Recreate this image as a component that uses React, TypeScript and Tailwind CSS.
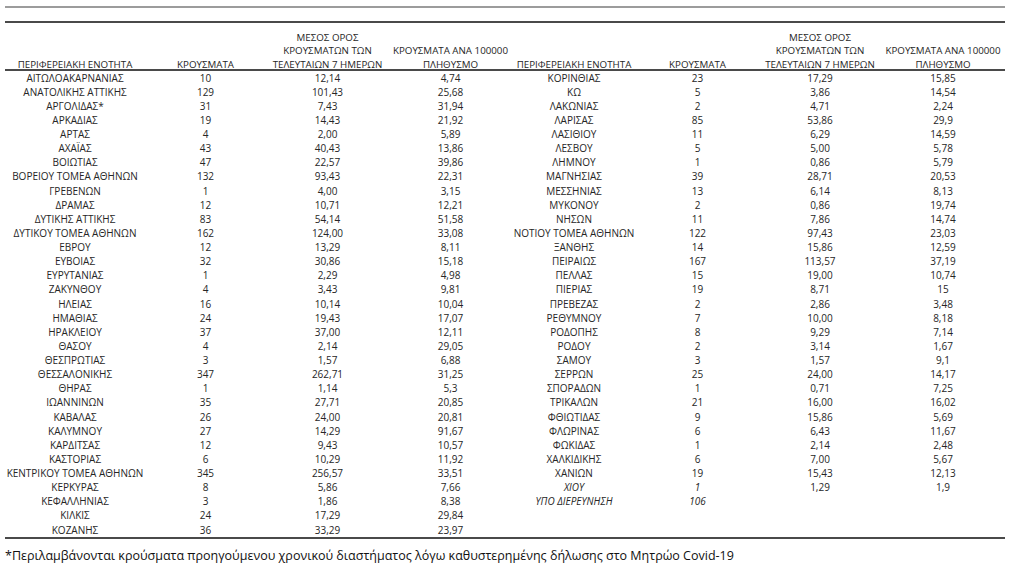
const left: string[][] = [
  ['ΑΙΤΩΛΟΑΚΑΡΝΑΝΙΑΣ', '10', '12,14', '4,74'],
  ['ΑΝΑΤΟΛΙΚΗΣ ΑΤΤΙΚΗΣ', '129', '101,43', '25,68'],
  ['ΑΡΓΟΛΙΔΑΣ*', '31', '7,43', '31,94'],
  ['ΑΡΚΑΔΙΑΣ', '19', '14,43', '21,92'],
  ['ΑΡΤΑΣ', '4', '2,00', '5,89'],
  ['ΑΧΑΪΑΣ', '43', '40,43', '13,86'],
  ['ΒΟΙΩΤΙΑΣ', '47', '22,57', '39,86'],
  ['ΒΟΡΕΙΟΥ ΤΟΜΕΑ ΑΘΗΝΩΝ', '132', '93,43', '22,31'],
  ['ΓΡΕΒΕΝΩΝ', '1', '4,00', '3,15'],
  ['ΔΡΑΜΑΣ', '12', '10,71', '12,21'],
  ['ΔΥΤΙΚΗΣ ΑΤΤΙΚΗΣ', '83', '54,14', '51,58'],
  ['ΔΥΤΙΚΟΥ ΤΟΜΕΑ ΑΘΗΝΩΝ', '162', '124,00', '33,08'],
  ['ΕΒΡΟΥ', '12', '13,29', '8,11'],
  ['ΕΥΒΟΙΑΣ', '32', '30,86', '15,18'],
  ['ΕΥΡΥΤΑΝΙΑΣ', '1', '2,29', '4,98'],
  ['ΖΑΚΥΝΘΟΥ', '4', '3,43', '9,81'],
  ['ΗΛΕΙΑΣ', '16', '10,14', '10,04'],
  ['ΗΜΑΘΙΑΣ', '24', '19,43', '17,07'],
  ['ΗΡΑΚΛΕΙΟΥ', '37', '37,00', '12,11'],
  ['ΘΑΣΟΥ', '4', '2,14', '29,05'],
  ['ΘΕΣΠΡΩΤΙΑΣ', '3', '1,57', '6,88'],
  ['ΘΕΣΣΑΛΟΝΙΚΗΣ', '347', '262,71', '31,25'],
  ['ΘΗΡΑΣ', '1', '1,14', '5,3'],
  ['ΙΩΑΝΝΙΝΩΝ', '35', '27,71', '20,85'],
  ['ΚΑΒΑΛΑΣ', '26', '24,00', '20,81'],
  ['ΚΑΛΥΜΝΟΥ', '27', '14,29', '91,67'],
  ['ΚΑΡΔΙΤΣΑΣ', '12', '9,43', '10,57'],
  ['ΚΑΣΤΟΡΙΑΣ', '6', '10,29', '11,92'],
  ['ΚΕΝΤΡΙΚΟΥ ΤΟΜΕΑ ΑΘΗΝΩΝ', '345', '256,57', '33,51'],
  ['ΚΕΡΚΥΡΑΣ', '8', '5,86', '7,66'],
  ['ΚΕΦΑΛΛΗΝΙΑΣ', '3', '1,86', '8,38'],
  ['ΚΙΛΚΙΣ', '24', '17,29', '29,84'],
  ['ΚΟΖΑΝΗΣ', '36', '33,29', '23,97'],
];

const right: string[][] = [
  ['ΚΟΡΙΝΘΙΑΣ', '23', '17,29', '15,85'],
  ['ΚΩ', '5', '3,86', '14,54'],
  ['ΛΑΚΩΝΙΑΣ', '2', '4,71', '2,24'],
  ['ΛΑΡΙΣΑΣ', '85', '53,86', '29,9'],
  ['ΛΑΣΙΘΙΟΥ', '11', '6,29', '14,59'],
  ['ΛΕΣΒΟΥ', '5', '5,00', '5,78'],
  ['ΛΗΜΝΟΥ', '1', '0,86', '5,79'],
  ['ΜΑΓΝΗΣΙΑΣ', '39', '28,71', '20,53'],
  ['ΜΕΣΣΗΝΙΑΣ', '13', '6,14', '8,13'],
  ['ΜΥΚΟΝΟΥ', '2', '0,86', '19,74'],
  ['ΝΗΣΩΝ', '11', '7,86', '14,74'],
  ['ΝΟΤΙΟΥ ΤΟΜΕΑ ΑΘΗΝΩΝ', '122', '97,43', '23,03'],
  ['ΞΑΝΘΗΣ', '14', '15,86', '12,59'],
  ['ΠΕΙΡΑΙΩΣ', '167', '113,57', '37,19'],
  ['ΠΕΛΛΑΣ', '15', '19,00', '10,74'],
  ['ΠΙΕΡΙΑΣ', '19', '8,71', '15'],
  ['ΠΡΕΒΕΖΑΣ', '2', '2,86', '3,48'],
  ['ΡΕΘΥΜΝΟΥ', '7', '10,00', '8,18'],
  ['ΡΟΔΟΠΗΣ', '8', '9,29', '7,14'],
  ['ΡΟΔΟΥ', '2', '3,14', '1,67'],
  ['ΣΑΜΟΥ', '3', '1,57', '9,1'],
  ['ΣΕΡΡΩΝ', '25', '24,00', '14,17'],
  ['ΣΠΟΡΑΔΩΝ', '1', '0,71', '7,25'],
  ['ΤΡΙΚΑΛΩΝ', '21', '16,00', '16,02'],
  ['ΦΘΙΩΤΙΔΑΣ', '9', '15,86', '5,69'],
  ['ΦΛΩΡΙΝΑΣ', '6', '6,43', '11,67'],
  ['ΦΩΚΙΔΑΣ', '1', '2,14', '2,48'],
  ['ΧΑΛΚΙΔΙΚΗΣ', '6', '7,00', '5,67'],
  ['ΧΑΝΙΩΝ', '19', '15,43', '12,13'],
  ['ΧΙΟΥ', '1', '1,29', '1,9'],
  ['ΥΠΟ ΔΙΕΡΕΥΝΗΣΗ', '106', '', ''],
];

// name + cases columns are set in italics for these rows
const italicRows = new Set(['ΧΙΟΥ', 'ΥΠΟ ΔΙΕΡΕΥΝΗΣΗ']);

function HeaderCells() {
  return (
    <>
      <div className="flex items-end justify-center">
        <span className="-mb-[2px]">ΠΕΡΙΦΕΡΕΙΑΚΗ ΕΝΟΤΗΤΑ</span>
      </div>
      <div className="flex items-end justify-center">
        <span className="-mb-[2px]">ΚΡΟΥΣΜΑΤΑ</span>
      </div>
      <div className="flex items-end justify-center">
        <div className="-mb-[2px] flex flex-col items-center">
          <span>ΜΕΣΟΣ ΟΡΟΣ</span>
          <span>ΚΡΟΥΣΜΑΤΩΝ ΤΩΝ</span>
          <span>ΤΕΛΕΥΤΑΙΩΝ 7 ΗΜΕΡΩΝ</span>
        </div>
      </div>
      <div className="flex items-end justify-center">
        <div className="-mb-[2px] flex flex-col items-center">
          <span>ΚΡΟΥΣΜΑΤΑ ΑΝΑ 100000</span>
          <span>ΠΛΗΘΥΣΜΟ</span>
        </div>
      </div>
    </>
  );
}

function Rows({ rows }: { rows: string[][] }) {
  return (
    <>
      {rows.map((r) =>
        r.map((c, i) => (
          <div
            key={r[0] + i}
            className={`flex h-[14.14px] items-center justify-center whitespace-nowrap ${
              italicRows.has(r[0]) && i < 2 ? 'italic' : ''
            }`}
          >
            {c}
          </div>
        )),
      )}
    </>
  );
}

export default function App() {
  return (
    <div className="h-[573px] w-[1024px] overflow-hidden bg-white font-['Open_Sans',sans-serif] text-[#262626]">
      <div className="pl-[5px] pt-[6px]">
        <div className="h-[2px] w-[1000px] bg-[#9c9c9c]" />
        <div className="mt-[13px] h-[2px] w-[1000px] bg-[#4a4a4a]" />

        {/* header */}
        <div className="grid h-[48px] w-[1000px] grid-cols-[140px_121px_123px_123px_124px_123px_122px_124px] border-b-2 border-[#4a4a4a] text-[9.75px] leading-[13.3px]">
          <HeaderCells />
          <HeaderCells />
        </div>

        {/* body */}
        <div className="flex w-[1000px] items-start border-b-2 border-[#4a4a4a] text-[10px]">
          <div className="grid w-[507px] grid-cols-[140px_121px_123px_123px]">
            <Rows rows={left} />
          </div>
          <div className="grid w-[493px] grid-cols-[124px_123px_122px_124px]">
            <Rows rows={right} />
          </div>
        </div>

        <p className="mt-[9px] text-[12.5px] leading-[16px] text-[#111]">
          *Περιλαμβάνονται κρούσματα προηγούμενου χρονικού διαστήματος λόγω καθυστερημένης δήλωσης στο Μητρώο Covid-19
        </p>
      </div>
    </div>
  );
}
